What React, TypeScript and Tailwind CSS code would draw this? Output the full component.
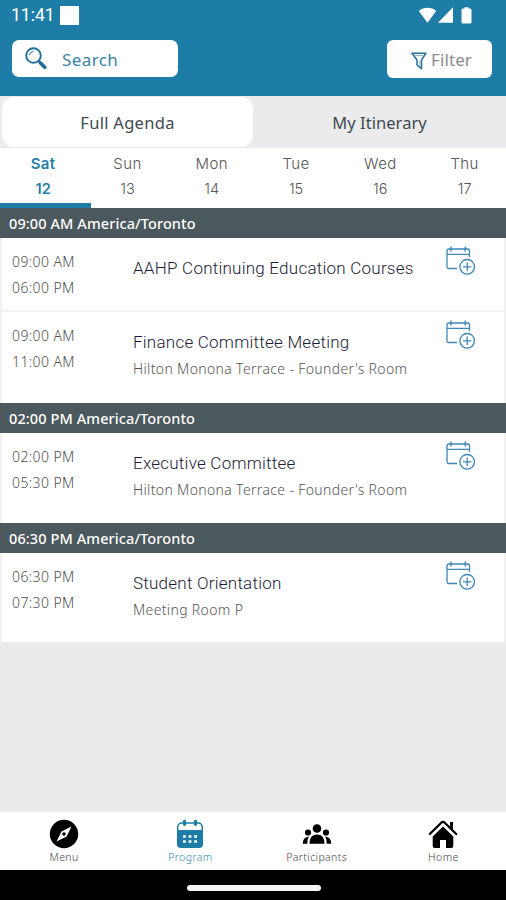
import React from 'react';

interface Session {
  start: string;
  end: string;
  title: string;
  room?: string;
  rowClass: string;
}

interface Block {
  label: string;
  sessions: Session[];
}

const days = [
  { name: 'Sat', date: '12' },
  { name: 'Sun', date: '13' },
  { name: 'Mon', date: '14' },
  { name: 'Tue', date: '15' },
  { name: 'Wed', date: '16' },
  { name: 'Thu', date: '17' },
];

const blocks: Block[] = [
  {
    label: '09:00 AM America/Toronto',
    sessions: [
      { start: '09:00 AM', end: '06:00 PM', title: 'AAHP Continuing Education Courses', rowClass: 'h-[72px]' },
      {
        start: '09:00 AM',
        end: '11:00 AM',
        title: 'Finance Committee Meeting',
        room: "Hilton Monona Terrace - Founder's Room",
        rowClass: 'h-[91px]',
      },
    ],
  },
  {
    label: '02:00 PM America/Toronto',
    sessions: [
      {
        start: '02:00 PM',
        end: '05:30 PM',
        title: 'Executive Committee',
        room: "Hilton Monona Terrace - Founder's Room",
        rowClass: 'h-[90px]',
      },
    ],
  },
  {
    label: '06:30 PM America/Toronto',
    sessions: [
      { start: '06:30 PM', end: '07:30 PM', title: 'Student Orientation', room: 'Meeting Room P', rowClass: 'h-[89px]' },
    ],
  },
];

const CalendarAddIcon = () => (
  <svg width="30" height="30" viewBox="0 0 30 30" fill="none" stroke="#3f87b5" strokeWidth="1.3" strokeLinecap="round">
    <path d="M10.500 22.500H3Q1 22.500 1 20.500V5Q1 3 3 3H21.500Q23.500 3 23.500 5V10.500M1 8.300H23.500" />
    <path d="M5 1V5.200M19.200 1V5.200" />
    <circle cx="21.200" cy="20.800" r="7.300" />
    <path d="M21.200 17V24.600M17.400 20.800H25" />
  </svg>
);

const StatusBar = () => (
  <div className="flex h-[31px] items-center justify-between pl-[11px] pr-[33px] text-white">
    <div className="flex items-center gap-[8px]">
      <span className="w-[41px] whitespace-nowrap pt-[1px] font-['Roboto'] text-[17.5px] leading-none">11:41</span>
      <span className="h-[19px] w-[19px] bg-white" />
    </div>
    <svg width="55" height="18" viewBox="0 0 55 18" fill="currentColor">
      <path d="M.8 4C5.500 -.2 13.500 -.2 18.200 4L9.500 15.800Z" />
      <path d="M35 .3V15.800H20Z" />
      <path d="M46.500 1.500V.2H50.500V1.500H52Q53.500 1.500 53.500 3V15Q53.500 16.500 52 16.500H45Q43.500 16.500 43.500 15V3Q43.500 1.500 45 1.500Z" />
    </svg>
  </div>
);

const SearchHeader = () => (
  <div className="flex items-start justify-between pl-[12px] pr-[14px] pt-[9px]">
    <div className="flex h-[37px] w-[166px] items-center rounded-[7px] bg-white pl-[13px]">
      <svg width="22" height="23" viewBox="0 0 22 23" fill="none" stroke="#1f6f98">
        <circle cx="8.500" cy="8.500" r="7.300" strokeWidth="1.900" />
        <path d="M4.500 8Q5 4.800 8.500 4.300" strokeWidth="1" />
        <path d="M13.500 14L15.500 15.800" strokeWidth="2" />
        <path d="M15.300 15.800L19.800 20.300" strokeWidth="3.600" strokeLinecap="round" />
      </svg>
      <span className="ml-[15px] pt-[2px] font-['Noto_Sans'] text-[17px] tracking-[0.4px] text-[#3a83a5]">Search</span>
    </div>
    <div className="flex h-[38px] w-[105px] items-center rounded-[6px] bg-white pl-[24px]">
      <svg className="mt-[3px]" width="16" height="18" viewBox="0 0 16 18" fill="none" stroke="#276f9c" strokeWidth="1.500" strokeLinejoin="round">
        <path d="M1 1.200H15L10.500 8V16.700L6 13V8Z" />
        <path d="M3 3.400H13" strokeWidth="1" stroke="#86adc8" />
        <path d="M9 8.500V14" strokeWidth="1.600" stroke="#a9bfd0" />
      </svg>
      <span className="ml-[4px] pt-[2px] font-['Noto_Sans'] text-[17px] tracking-[0.1px] text-[#8a8a8a]">Filter</span>
    </div>
  </div>
);

const AgendaTabs = () => (
  <div className="grid h-[52px] grid-cols-2 bg-[#ebebed] pb-[1px] pt-[1px] font-['Noto_Sans'] text-[16.5px] text-[#414a50]">
    <div className="ml-[2px] flex items-center justify-center rounded-[12px] bg-white pt-[3px] tracking-[0.3px]">Full Agenda</div>
    <div className="flex items-center justify-center pt-[3px] tracking-[0.05px]">My Itinerary</div>
  </div>
);

const DayStrip = () => (
  <div className="h-[60px] bg-white font-['Inter']">
    <div className="flex h-[55px] pl-[1px]">
      {days.map((day, i) => (
        <div
          key={day.name}
          className={`flex w-[84.3px] shrink-0 flex-col items-center pt-[4px] ${i === 0 ? 'font-semibold text-[#267fa8]' : 'font-light text-[#555555]'}`}
        >
          <span className="text-[15px] leading-[24px] tracking-[0.4px]">{day.name}</span>
          <span className="text-[14.5px] leading-[25px]">{day.date}</span>
        </div>
      ))}
    </div>
    <div className="h-[5px] w-[91px] bg-[#1d7da6]" />
  </div>
);

const SessionRow: React.FC<{ session: Session }> = ({ session }) => (
  <div className={`mx-[2px] flex bg-white ${session.rowClass}`}>
    <div className="w-[131px] pl-[10px] pt-[11px] font-['Noto_Sans'] text-[14px] font-light leading-[25.500px] tracking-[0.4px] text-[#505050]">
      <div>{session.start}</div>
      <div>{session.end}</div>
    </div>
    <div className="w-[313px] whitespace-nowrap pt-[17px]">
      <div className="font-['Roboto'] text-[17px] font-light leading-[26px] tracking-[0.24px] text-[#1c1c38]">{session.title}</div>
      {session.room && (
        <div className="font-['Noto_Sans'] text-[14px] font-light leading-[28px] tracking-[0.35px] text-[#555555]">{session.room}</div>
      )}
    </div>
    <div className="pt-[8px]">
      <CalendarAddIcon />
    </div>
  </div>
);

const BottomNav = () => (
  <div className="grid h-[58px] grid-cols-4 bg-white pl-[1px] font-['Noto_Sans'] text-[10.5px] font-light leading-[14px] tracking-[0.4px] text-[#444444]">
    <div className="flex flex-col items-center pt-[7px]">
      <svg width="30" height="30" viewBox="0 0 30 30">
        <circle cx="15" cy="15" r="14.200" fill="#000000" />
        <path d="M22.500 7.500L17.600 17.500L7.500 22.500L12.500 12.400Z" fill="#ffffff" />
        <circle cx="15" cy="15" r="1.800" fill="#000000" />
      </svg>
      <span className="pt-[1px]">Menu</span>
    </div>
    <div className="flex flex-col items-center pt-[7px] text-[#2f87b0]">
      <svg width="28" height="30" viewBox="0 0 28 30">
        <rect x="1.700" y="4" width="24.600" height="24" rx="4" fill="#ffffff" stroke="#1d7da6" strokeWidth="1.500" />
        <path d="M1 11H27V25Q27 29 23 29H5Q1 29 1 25Z" fill="#1d7da6" />
        <path d="M8.500 2V5.500M19.500 2V5.500" stroke="#1d7da6" strokeWidth="3" strokeLinecap="round" />
        <path d="M7 17.500H9.800M12.600 17.500H15.400M18.200 17.500H21M7 22.500H9.800M12.600 22.500H15.400M18.200 22.500H21" stroke="#ffffff" strokeWidth="2.500" />
      </svg>
      <span className="pt-[1px]">Program</span>
    </div>
    <div className="flex flex-col items-center pt-[7px]">
      <svg width="30" height="30" viewBox="0 0 30 30" fill="#000000">
        <circle cx="15" cy="9.500" r="4.300" />
        <circle cx="6" cy="13.500" r="3.100" />
        <circle cx="24" cy="13.500" r="3.100" />
        <path d="M7.500 24.800Q7.500 15.500 15 15.500Q22.500 15.500 22.500 24.800Z" />
        <path d="M.8 24.800Q.8 18 6.800 17.500Q5.300 20.500 5.300 24.800ZM29.200 24.800Q29.200 18 23.200 17.500Q24.700 20.500 24.700 24.800Z" />
      </svg>
      <span className="pt-[1px]">Participants</span>
    </div>
    <div className="flex flex-col items-center pt-[7px] pl-[1px]">
      <svg width="30" height="30" viewBox="0 0 30 30">
        <path d="M1.800 15L13.500 3.500Q15 2.300 16.500 3.500L28.200 15" fill="none" stroke="#000000" strokeWidth="2.300" strokeLinecap="round" />
        <path d="M22 3H25V11L22 7.500Z" fill="#000000" />
        <path d="M15 7.500L25.300 17.500V27Q25.300 29 23.300 29H18V21H12V29H6.700Q4.700 29 4.700 27V17.500Z" fill="#000000" />
      </svg>
      <span className="pt-[1px]">Home</span>
    </div>
  </div>
);

export default function App() {
  return (
    <div className="flex h-[900px] w-[506px] flex-col overflow-hidden bg-[#ebebeb]">
      <header className="h-[96px] shrink-0 bg-[#1d7da6]">
        <StatusBar />
        <SearchHeader />
      </header>
      <AgendaTabs />
      <DayStrip />
      <main className="flex-1">
        {blocks.map((block) => (
          <section key={block.label}>
            <div className="h-[30px] bg-[#4b585d] pl-[9px] font-['Noto_Sans'] text-[14.500px] font-medium leading-[31px] tracking-[0.1px] text-white">
              {block.label}
            </div>
            <div className="flex flex-col gap-[2px] bg-[#f1f1f1]">
              {block.sessions.map((session) => (
                <SessionRow key={session.title} session={session} />
              ))}
            </div>
          </section>
        ))}
      </main>
      <BottomNav />
      <div className="flex h-[30px] shrink-0 justify-center bg-black pt-[15px] pl-[1px]">
        <div className="h-[6px] w-[134px] rounded-full bg-[#f5f5f5]" />
      </div>
    </div>
  );
}
